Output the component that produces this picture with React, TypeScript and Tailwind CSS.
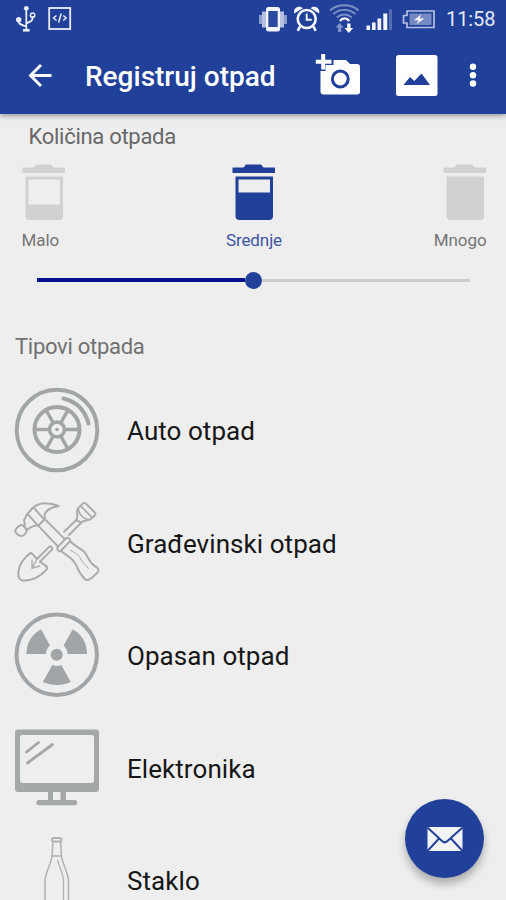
import { useState } from "react";
import type { ReactNode } from "react";

const ICON = "h-[90px] w-[90px] shrink-0";

function UsbIcon() {
  return (
    <svg viewBox="16 5 20 28" className="h-7 w-5" fill="none" stroke="#e9edfa" strokeWidth="1.8">
      <path d="M26.3 8v22M18.7 20v1.5c0 2.5 2.5 3.5 7.6 5M32.5 16v2.5c0 2.5-2 3.2-6.2 5" />
      <circle cx="26.3" cy="8.3" r="2.4" fill="#e9edfa" stroke="none" />
      <circle cx="18.7" cy="19.7" r="2.7" fill="#e9edfa" stroke="none" />
      <circle cx="32.6" cy="15.2" r="2.2" strokeWidth="1.5" />
      <path d="M23 30.3h6.6" strokeWidth="2.6" />
    </svg>
  );
}

function CodeIcon() {
  return (
    <svg viewBox="48 7 24 24" className="h-6 w-6" fill="none" stroke="#e9edfa">
      <rect x="49.2" y="8" width="21" height="21" strokeWidth="1.8" />
      <path d="M56.5 15.5 53.5 18l3 2.5M63.2 15.5l3 2.5-3 2.5M61.2 13.5l-2.6 9" strokeWidth="1.5" />
    </svg>
  );
}

function VibrateIcon() {
  return (
    <svg viewBox="258 5 30 27" className="h-[27px] w-[30px]">
      <path d="M259 14h3v9h-3zM284 14h3v9h-3z" fill="#8c9dce" />
      <path d="M262 10.5h4v16h-4zM280 10.5h4v16h-4z" fill="#b7c2e2" />
      <rect x="266" y="6" width="14" height="24.5" rx="2.5" fill="#f2f5fc" />
      <path d="M268.3 10h9.4v16h-9.4z" fill="#2c4ba0" />
    </svg>
  );
}

function AlarmIcon() {
  return (
    <svg viewBox="293 4 27 28" className="h-7 w-[27px]" fill="none" stroke="#f5f7fd">
      <circle cx="306.7" cy="18" r="9" strokeWidth="2.6" />
      <path d="M306.7 12.5v6.2h5" strokeWidth="1.9" />
      <path d="m300 25.5-2.3 4.3M313.4 25.5l2.3 4.3" strokeWidth="2.6" />
      <path
        d="M294.3 12.5c-1-3.8 1.5-6.8 5-6.8 1.5 0 2.8.6 3.5 1.5zM319.1 12.5c1-3.8-1.5-6.8-5-6.8-1.5 0-2.8.6-3.5 1.5z"
        fill="#f5f7fd"
        stroke="none"
      />
    </svg>
  );
}

function WifiIcon() {
  return (
    <svg viewBox="329 3 31 30" className="h-[30px] w-[31px]" fill="none">
      <path
        d="M330 9.5c8-7 20.5-7 28.5 0M333.3 13c6.3-5.5 15.8-5.5 22 0M336.8 16.500c4.5-4 10.6-4 15 0"
        stroke="#7d90c8"
        strokeWidth="1.9"
      />
      <path d="M340 20c2.6-3.5 6.6-3.5 9.2 0" stroke="#f5f7fd" strokeWidth="2.4" />
      <path d="m339.7 22 4.2 4.5h-2.6v4.5h-3.2v-4.5h-2.6z" fill="#8295ca" />
      <path d="M347.2 22.5h3.3v4.5h2.7l-4.4 5-4.3-5h2.7z" fill="#fff" />
    </svg>
  );
}

function SignalIcon() {
  return (
    <svg viewBox="366 8 27 23" className="h-[23px] w-[27px]" fill="#f2f5fc">
      <path d="M366.5 25.5h3.6v4.5h-3.6zM372 22.5h3.6V30H372zM377.5 18.5h3.7V30h-3.7zM383.3 13.5h4V30h-4z" />
      <path d="M389 9.5h3V30h-3z" fill="#566fb4" />
    </svg>
  );
}

function BatteryIcon() {
  return (
    <svg viewBox="401 8 35 21" className="h-[21px] w-[35px]">
      <path
        d="M407 10h27v16.5h-27v-4.5h-3.5v-7.5h3.5z"
        fill="#20409a"
        stroke="#b5c0e1"
        strokeWidth="1.7"
      />
      <path d="M409.5 12.5h22v11.5h-22z" fill="#7589c3" />
      <path d="m421.5 13.2-7.5 6h4.7l-2.2 4 7.7-5.7h-4.8z" fill="#fff" />
    </svg>
  );
}

function StatusBar() {
  return (
    <div className="flex h-[38px] items-center pl-4 pr-[10px]">
      <UsbIcon />
      <div className="ml-3">
        <CodeIcon />
      </div>
      <div className="ml-auto flex items-center">
        <VibrateIcon />
        <div className="ml-[5px]">
          <AlarmIcon />
        </div>
        <div className="ml-[9px]">
          <WifiIcon />
        </div>
        <div className="ml-[6px]">
          <SignalIcon />
        </div>
        <div className="ml-[8px]">
          <BatteryIcon />
        </div>
        <span className="ml-[10px] w-[50px] whitespace-nowrap text-[20px] leading-none tracking-[-0.1px] text-[#e4e9f6]">
          11:58
        </span>
      </div>
    </div>
  );
}

function Toolbar() {
  return (
    <div className="flex h-[76px] items-center pl-7">
      <button aria-label="Nazad">
        <svg viewBox="28 64 24 24" className="h-6 w-6" fill="none" stroke="#f8faff" strokeWidth="2.9">
          <path d="M51.5 75.5H30.5M41 65 30.5 75.5 41 86" />
        </svg>
      </button>
      <h1 className="ml-[33px] w-[230px] whitespace-nowrap pt-0.5 text-[28px] font-medium leading-none text-white">
        Registruj otpad
      </h1>
      <button aria-label="Dodaj fotografiju">
        <svg viewBox="314.500 54 46 44" className="h-11 w-[46px]">
          <path
            d="M333 60h12.500l4 4h7a3 3 0 0 1 3 3v24.500a3 3 0 0 1-3 3h-33.500a3 3 0 0 1-3-3V71h5v-6h8z"
            fill="#fff"
          />
          <path d="M322.700 54v15.500M315.300 61.700h15.700" stroke="#fff" strokeWidth="4" />
          <circle cx="339.800" cy="79" r="7.900" fill="none" stroke="#20409a" strokeWidth="3" />
        </svg>
      </button>
      <button aria-label="Galerija" className="ml-[35px]">
        <svg viewBox="396 54 42 44" className="h-11 w-[42px]">
          <rect x="396" y="55" width="41.500" height="41" rx="2.500" fill="#fff" />
          <path d="m403.500 85 6.500-8 4.300 4 7.200-7.500 8.500 11.500z" fill="#20409a" />
        </svg>
      </button>
      <button aria-label="Meni" className="ml-[31px]">
        <svg viewBox="469 63 8 26" className="h-[26px] w-2" fill="#fff">
          <circle cx="473" cy="66.700" r="3.200" />
          <circle cx="473" cy="75.200" r="3.200" />
          <circle cx="473" cy="83.500" r="3.200" />
        </svg>
      </button>
    </div>
  );
}

/** Trash can filled from the level line down. */
function BinIcon({ level }: { level: number }) {
  return (
    <svg viewBox="0 0 44 58" className="h-[58px] w-11" fill="currentColor">
      <path d="M.5 4.500h11l2.500-3h15l2.500 3h11.500v5.500H.5z" />
      <path
        fillRule="evenodd"
        d={`M3.500 13.500h37.500v39.500a4 4 0 0 1-4 4h-29.500a4 4 0 0 1-4-4zM6.500 16.500v${level}h31.500v-${level}z`}
      />
    </svg>
  );
}

const QUANTITIES = [
  { name: "Malo", level: 25, row: "items-start" },
  { name: "Srednje", level: 13, row: "items-center" },
  { name: "Mnogo", level: 0, row: "items-end" },
];

function QuantityPicker() {
  const [value, setValue] = useState(1);

  return (
    <section>
      <h2 className="pl-[28.5px] pt-[10px] text-[22px] leading-[26px] tracking-[-0.28px] text-[#686868]">
        Količina otpada
      </h2>
      <div className="mt-[13px] grid grid-cols-3 pl-[21.5px] pr-[19.5px]">
        {QUANTITIES.map((q, i) => (
          <button
            key={q.name}
            onClick={() => setValue(i)}
            className={`flex flex-col ${q.row} ${i === value ? "text-[#20409a]" : "text-[#d0d1d2]"}`}
          >
            <BinIcon level={q.level} />
            <span
              className={`mt-[9px] text-[17px] leading-5 tracking-[-0.1px] ${i === value ? "text-[#3c54a3]" : "text-[#757575]"}`}
            >
              {q.name}
            </span>
          </button>
        ))}
      </div>
      <div className="ml-[37px] mr-[36px] mt-[21px] flex h-[18px] items-center">
        <div className="h-1 flex-1 bg-[#07118d]" />
        <div className="h-[17px] w-[17px] rounded-full bg-[#20409a]" />
        <div className="h-[3px] flex-1 bg-[#cdcdcd]" />
      </div>
    </section>
  );
}

function WheelIcon() {
  return (
    <svg viewBox="12 385 90 90" className={ICON} fill="none" stroke="#a2a5a6" strokeLinecap="round">
      <circle cx="57" cy="430" r="40.300" strokeWidth="3.900" />
      <circle cx="57" cy="429.500" r="22.500" strokeWidth="4" />
      <circle cx="57" cy="429.500" r="7.500" strokeWidth="3.500" />
      <circle cx="57" cy="429.500" r="1.800" fill="#a2a5a6" stroke="none" />
      <path
        d="M64.500 429.500H79M49.500 429.500H35M60.700 423 68 410M53.300 423 46 410M60.700 436 68 449M53.300 436 46 449"
        strokeWidth="3.500"
      />
      <path d="M63.500 398.500c12.500 3 21.500 12 25 25" strokeWidth="4" />
    </svg>
  );
}

function ToolsIcon() {
  return (
    <svg
      viewBox="6 6 270 270"
      className={ICON}
      fill="none"
      stroke="#a9acad"
      strokeWidth="6"
      strokeLinejoin="round"
      strokeLinecap="round"
    >
      {/* hammer */}
      <path d="M56 50C70 30 86 22 104 22c16 0 30 3 42 8-22 4-38 12-42 26v14L84 89 52 53l-10 20 3 13" />
      <path d="M73 37l30 34M84 89c-12-2-20 3-33 12" />
      <path d="M20 96c6-6 14-10 18-8 8 5 12 12 11 19-1 6-9 13-15 13-8 0-18-9-18-15 0-3 2-6 4-9zM40 88l11 16" />
      <path d="M87 91l57 61M106 71l57 57" />
      {/* hammer handle */}
      <path d="M144 152l25-26c4-3 13 4 11 10l-28 29c-5 4-14-6-8-13z" />
      <path d="M153 165c26 20 39 26 47 46 5 14 14 27 24 38 13 10 26-8 40-21 6-8-3-14-12-20-16-9-16-25-29-40-12-12-30-18-43-33" />
      <path d="M181 163c16 8 26 14 31 26 4 10 14 16 23 28" strokeWidth="3" />
      {/* spade */}
      <path d="M162 107l37-35M177 117l37-37" />
      <path d="M199 72c6-9 0-22 4-34l16-16c4-2 8 0 11 3l24 24c3 4 3 8-1 11l-14 11c-12 4-18 0-25 9z" />
      <path d="M213 31l34 34M205 40c4 17 12 27 30 31" strokeWidth="5" />
      <path d="M81 189l37-37c5-3 11 4 8 9L90 197" />
      <path d="M81 189 63 170c-22 16-36 36-38 58 0 14 0 23 14 26 28 0 52-12 71-34 2-4 1-8-3-11L90 197" />
      <path d="M66 192v25l23-7M66 217l15-28" strokeWidth="4" />
    </svg>
  );
}

function HazardIcon() {
  return (
    <svg viewBox="12 610 90 90" className={ICON} fill="#a2a5a7">
      <circle cx="56.700" cy="654.700" r="40.200" fill="none" stroke="#a2a5a7" strokeWidth="4" />
      <circle cx="56.700" cy="654.700" r="6" />
      <path d="M41 629.200 50 645.500c-2.500 2-4 5-4 8.500H26.500c0-11 5-19.500 14.500-24.800z" />
      <path d="M72.800 629.200 63.500 645.500c2.500 2 4 5 4 8.500H87c0-11-5-19.500-14.200-24.800z" />
      <path d="M52.300 665c3 1.200 6 1.200 9 0l9.500 17c-9 4-19 4-28 0z" />
    </svg>
  );
}

function MonitorIcon() {
  return (
    <svg viewBox="12 723 90 90" className={ICON} fill="#a5a8a9">
      <path
        fillRule="evenodd"
        d="M18 729.500h78a3 3 0 0 1 3 3v56.500a3 3 0 0 1-3 3H18a3 3 0 0 1-3-3v-56.500a3 3 0 0 1 3-3zM22 735a2 2 0 0 0-2 2v43.500a2.500 2.500 0 0 0 2 2.500h70a2.500 2.500 0 0 0 2-2.500v-43.500a2 2 0 0 0-2-2z"
      />
      <path d="M48 792h5v8h7.500v-8h5.500v8h8.500a2.600 2.600 0 0 1 0 5.300H39a2.600 2.600 0 0 1 0-5.300h9z" />
      <path d="m26.500 752 12-9.500M27.500 763l25-18.500" fill="none" stroke="#a5a8a9" strokeWidth="2.800" strokeLinecap="round" />
    </svg>
  );
}

function BottleIcon() {
  return (
    <svg viewBox="12 835 90 90" className={ICON} fill="none" stroke="#afb1b2" strokeWidth="1.500">
      <rect x="52" y="838" width="9.500" height="3.500" rx="1.500" strokeWidth="2" />
      <path d="M53 841.500 52 855.500c-.5 8-6.500 16-7 25v45M60.500 841.500l1 14c.5 8 6.500 16 7 25v45M52 856h9.500" />
      <path d="M57.500 860c2 7 5 12 6 20v42" strokeWidth="1.300" />
    </svg>
  );
}

const WASTE_TYPES: { name: string; icon: ReactNode }[] = [
  { name: "Auto otpad", icon: <WheelIcon /> },
  { name: "Građevinski otpad", icon: <ToolsIcon /> },
  { name: "Opasan otpad", icon: <HazardIcon /> },
  { name: "Elektronika", icon: <MonitorIcon /> },
  { name: "Staklo", icon: <BottleIcon /> },
];

export default function App() {
  return (
    <div className="relative h-[900px] w-[506px] overflow-hidden bg-[#eeeeee] font-['Roboto',sans-serif]">
      <header className="relative h-[114px] bg-[#20409a] shadow-[0_2px_5px_rgba(0,0,0,0.35)]">
        <StatusBar />
        <Toolbar />
      </header>

      <QuantityPicker />

      <section>
        <h2 className="pl-[15px] pt-[45px] text-[22px] leading-[26px] tracking-[-0.28px] text-[#707070]">
          Tipovi otpada
        </h2>
        <ul className="mt-[14px]">
          {WASTE_TYPES.map((t) => (
            <li key={t.name} className="flex h-[112.5px] items-center pl-3">
              {t.icon}
              <span className="ml-[25px] pt-0.5 text-[26px] leading-[30px] tracking-[0.06px] text-[#161616]">
                {t.name}
              </span>
            </li>
          ))}
        </ul>
      </section>

      <button
        aria-label="Pošalji"
        className="absolute left-[405px] top-[799px] flex h-[79px] w-[79px] items-center justify-center rounded-full bg-[#20409a] shadow-[0_6px_9px_rgba(0,0,0,0.28)]"
      >
        <svg viewBox="426 826 38 26" className="h-[26px] w-[38px]">
          <path d="M427.500 827h35v24h-35z" fill="#f2f3f7" />
          <path
            d="m427.500 827.500 14.500 13.500c2 2 3.500 2 5.500 0l15-13.500M427.500 851l12-13M462.500 851l-12-13"
            fill="none"
            stroke="#20409a"
            strokeWidth="1.900"
          />
        </svg>
      </button>
    </div>
  );
}
